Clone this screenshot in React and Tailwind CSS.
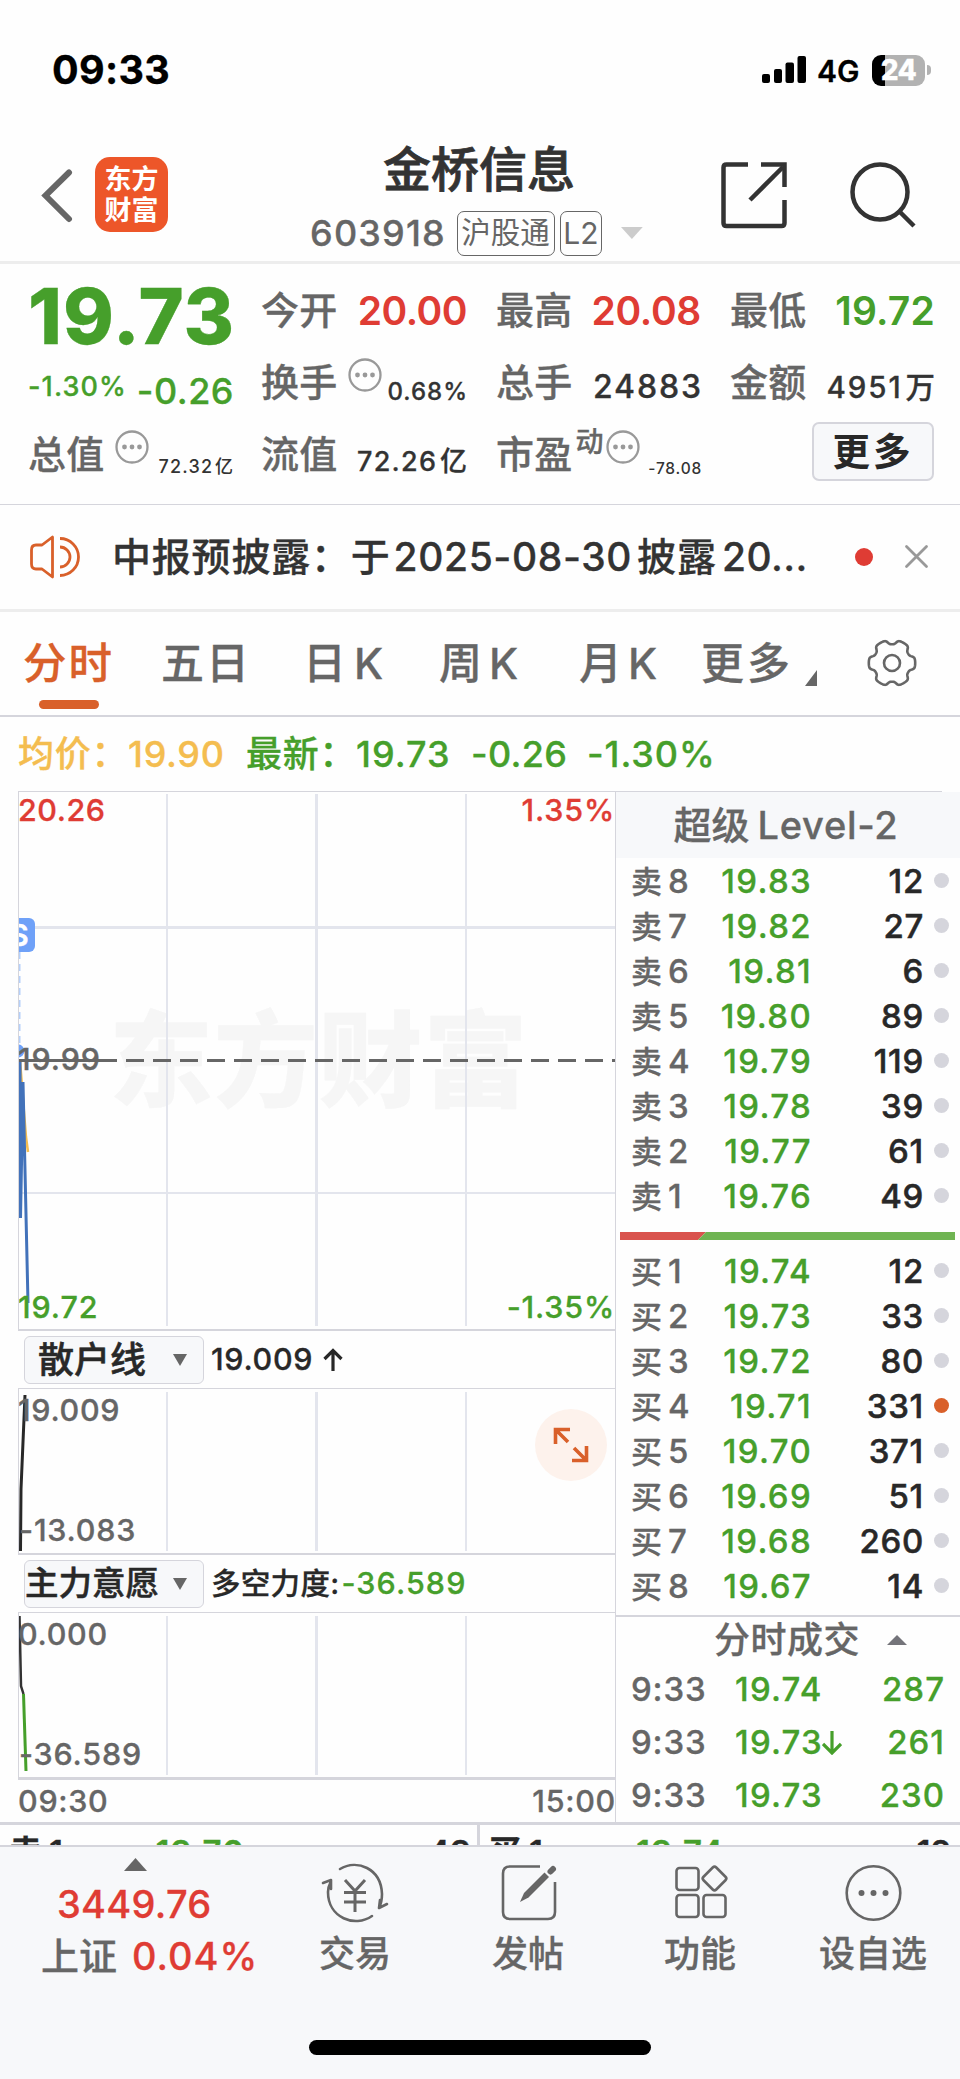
import React from 'react';

const sells = [
  ['8', '19.83', '12'],
  ['7', '19.82', '27'],
  ['6', '19.81', '6'],
  ['5', '19.80', '89'],
  ['4', '19.79', '119'],
  ['3', '19.78', '39'],
  ['2', '19.77', '61'],
  ['1', '19.76', '49'],
];

const buys = [
  ['1', '19.74', '12'],
  ['2', '19.73', '33'],
  ['3', '19.72', '80'],
  ['4', '19.71', '331', true],
  ['5', '19.70', '371'],
  ['6', '19.69', '51'],
  ['7', '19.68', '260'],
  ['8', '19.67', '14'],
];

const trades = [
  ['9:33', '19.74', '', '287'],
  ['9:33', '19.73', 'down', '261'],
  ['9:33', '19.73', '', '230'],
];

// outline of the six-toothed settings gear
const gearPath = (() => {
  const points = [];
  for (let i = 0; i < 180; i++) {
    const a = (i / 180) * Math.PI * 2;
    const r = 20.8 + 2.4 * Math.tanh(2.2 * Math.cos(6 * a) + 0.8);
    points.push(`${(25 + r * Math.cos(a)).toFixed(2)} ${(25 + r * Math.sin(a)).toFixed(2)}`);
  }
  return `M${points.join('L')}Z`;
})();

const Dots = ({ className }) => (
  <svg className={className} width="34" height="34" viewBox="0 0 34 34" fill="none">
    <circle cx="17" cy="17" r="15.500" stroke="#999" strokeWidth="2.300" />
    <circle cx="9.500" cy="17" r="2.400" fill="#999" />
    <circle cx="17" cy="17" r="2.400" fill="#999" />
    <circle cx="24.500" cy="17" r="2.400" fill="#999" />
  </svg>
);

const Arrow = ({ down, className }) => (
  <svg className={className} width="20" height="24" viewBox="0 0 20 24" fill="none" stroke="currentColor" strokeWidth="3.200">
    {down ? <path d="M10 0V22M1 13L10 22L19 13" /> : <path d="M10 23V3M1.500 11L10 2.500L18.500 11" />}
  </svg>
);

const StatusBar = () => (
  <div className="flex h-[140px] items-start justify-between pl-[52px] pr-[29px] text-black">
    <div className="mt-[51px] text-[39.500px] leading-none font-bold tracking-[0.300px]">09:33</div>
    <div className="mt-[54px] flex h-[32px] items-center">
      <svg width="44" height="28" viewBox="0 0 44 28">
        <rect x="0" y="18" width="8" height="9" rx="2" />
        <rect x="12" y="13" width="8" height="14" rx="2" />
        <rect x="23.500" y="6.500" width="8.500" height="20.500" rx="2" />
        <rect x="35.500" y="0" width="8.500" height="27" rx="2" />
      </svg>
      <span className="ml-[11px] w-[43px] pt-px text-[30px] leading-none font-semibold">4G</span>
      <div className="ml-[12px] flex h-[31px] w-[53px] items-center justify-center overflow-hidden rounded-[9px] bg-[linear-gradient(to_right,#000_13px,#b2b2b2_13px)]">
        <span className="text-[28px] leading-none font-extrabold tracking-[-0.5px] text-white">24</span>
      </div>
      <div className="ml-[2px] h-[10px] w-[4px] rounded-r-full bg-[#b2b2b2]" />
    </div>
  </div>
);

const Header = () => (
  <div className="flex h-[124px] border-b-[3px] border-[#ededed] pl-[41px]">
    <svg className="mt-[28px]" width="32" height="56" viewBox="0 0 32 56" fill="none" stroke="#666" strokeWidth="6" strokeLinecap="round">
      <path d="M28 4.500L4.500 27.500L28 51" strokeLinejoin="miter" />
    </svg>
    <div className="mt-[17px] ml-[22px] flex h-[75px] w-[73px] flex-col items-center justify-center rounded-[15px] bg-[#ed5629] pt-px text-[27px] leading-[31px] font-semibold text-white [-webkit-text-stroke:0px]">
      <span>东方</span>
      <span>财富</span>
    </div>
    <div className="ml-[142px] w-[334px]">
      <div className="mt-[6px] ml-[73px] text-[48px] leading-none font-medium text-[#333] [-webkit-text-stroke:0.800px_#333]">金桥信息</div>
      <div className="mt-[16px] flex h-[46px] items-center">
        <span className="w-[148px] text-[36px] leading-none font-medium tracking-[1.200px] text-[#666]">603918</span>
        <span className="flex h-[45px] w-[99px] items-center justify-center rounded-[7px] border-[1.500px] border-[#666] text-[29.500px] leading-none font-normal text-[#666] [-webkit-text-stroke:0px]">沪股通</span>
        <span className="ml-[5px] flex h-[45px] w-[43px] items-center justify-center rounded-[7px] border-[1.500px] border-[#666] text-[30px] leading-none font-normal text-[#666] [-webkit-text-stroke:0px]">L2</span>
        <svg className="ml-[18px]" width="24" height="12" viewBox="0 0 24 12">
          <path d="M1 0H23L12 12Z" fill="#ccc" />
        </svg>
      </div>
    </div>
    <svg className="mt-[20px] ml-[75px]" width="70" height="70" viewBox="0 0 70 70" fill="none" stroke="#333" strokeWidth="4.500">
      <path d="M29 4.500H7.500Q4.500 4.500 4.500 7.500V63Q4.500 66 7.500 66H62.500Q65.500 66 65.500 63V40" />
      <path d="M42 4.500H65.500V27" />
      <path d="M31 40L64 7" />
    </svg>
    <svg className="mt-[20px] ml-[58px]" width="70" height="70" viewBox="0 0 70 70" fill="none" stroke="#333" strokeWidth="4.500">
      <circle cx="33" cy="32" r="27.500" />
      <path d="M52 51L67 66" />
    </svg>
  </div>
);

const Cell = ({ label, sup, dots, value, unit, valueClass }) => (
  <div className="flex h-[72px] items-center justify-between whitespace-nowrap leading-none">
    <div className="flex items-center">
      <span className="text-[38px] leading-none font-medium tracking-[0.300px] text-[#666]">{label}</span>
      {sup && <span className="-mt-[24px] ml-[3px] text-[28px] leading-none font-medium text-[#666]">{sup}</span>}
      {dots && <Dots className={sup ? '-mt-[15px] ml-[2px]' : '-mt-[15px] ml-[10px]'} />}
    </div>
    <span className={valueClass}>
      {value}
      {unit && <span className="ml-[0.100em] tracking-normal">{unit}</span>}
    </span>
  </div>
);

const Quote = () => (
  <div className="flex h-[241px] border-b border-[#d5d5dc] pt-[10px] pl-[28px]">
    <div className="w-[205px]">
      <div className="-mr-[2px] flex h-[84px] items-center justify-end text-[77px] leading-none font-extrabold tracking-[1px] text-[#469f2b]">19.73</div>
      <div className="flex h-[60px] items-center justify-between whitespace-nowrap text-[#469f2b]">
        <span className="-mt-[4px] text-[27px] leading-none font-medium tracking-[1.100px]">-1.30%</span>
        <span className="-mr-px mt-[6px] text-[36px] leading-none font-medium tracking-[0.500px]">-0.26</span>
      </div>
      <Cell label="总值" dots value="72.32" unit="亿" valueClass="mt-[26px] text-[18px] font-medium tracking-[1.200px] text-[#333] [-webkit-text-stroke:0px]" />
    </div>
    <div className="ml-[28px] w-[206px]">
      <Cell label="今开" value="20.00" valueClass="mt-[1px] text-[39px] font-semibold tracking-[-0.500px] text-[#df3c34] [-webkit-text-stroke:0px]" />
      <Cell label="换手" dots value="0.68%" valueClass="-mr-px mt-[20px] text-[24px] font-medium tracking-[1px] text-[#333]" />
      <Cell label="流值" value="72.26" unit="亿" valueClass="mt-[15px] text-[27px] font-medium tracking-[1.300px] text-[#333]" />
    </div>
    <div className="ml-[29px] w-[205px]">
      <Cell label="最高" value="20.08" valueClass="mt-[1px] text-[39px] font-semibold tracking-[-0.300px] text-[#df3c34] [-webkit-text-stroke:0px]" />
      <Cell label="总手" value="24883" valueClass="-mr-[2px] mt-[10px] text-[32px] font-medium tracking-[1.900px] text-[#333]" />
      <Cell label="市盈" sup="动" dots value="-78.08" valueClass="-mr-px mt-[29px] text-[15.500px] font-medium tracking-[0.800px] text-[#333] [-webkit-text-stroke:0px]" />
    </div>
    <div className="ml-[29px] w-[205px]">
      <Cell label="最低" value="19.72" valueClass="mt-[1px] text-[39px] font-semibold tracking-[0.200px] text-[#469f2b] [-webkit-text-stroke:0px]" />
      <Cell label="金额" value="4951" unit="万" valueClass="mt-[11px] text-[29.500px] font-medium tracking-[1.900px] text-[#333]" />
      <button className="mt-[4px] ml-[82px] flex h-[59px] w-[122px] items-center justify-center rounded-[7px] border-2 border-[#d5d5dc] bg-[#f7f8fa] text-[37.500px] leading-none font-semibold tracking-[3px] text-[#282828] [-webkit-text-stroke:0px]">
        更多
      </button>
    </div>
  </div>
);

const Notice = () => (
  <div className="flex h-[107px] items-center border-b-[3px] border-[#ededed] pl-[29px] whitespace-nowrap">
    <svg width="52" height="46" viewBox="0 0 52 46" fill="none" stroke="#d9602a" strokeWidth="2.800" strokeLinejoin="round">
      <path d="M23.500 3V43L13 35H7Q2.500 35 2.500 30V16Q2.500 11 7 11H13Z" />
      <path d="M31 13A9.800 9.800 0 0 1 31 33M31 4.500A18.500 18.500 0 0 1 31 41.500" />
    </svg>
    <div className="ml-[31px] flex w-[740px] items-center pb-[2px] text-[39px] leading-none font-medium text-[#333]">
      <span className="tracking-[0.800px]">中报预披露：于</span>
      <span className="ml-[3px] tracking-[0.600px]">2025-08-30</span>
      <span className="ml-[5px] tracking-[1px]">披露</span>
      <span className="ml-[5px] tracking-[0.400px]">20...</span>
    </div>
    <div className="ml-[3px] size-[18px] rounded-full bg-[#df3c34]" />
    <svg className="ml-[31px]" width="26" height="26" viewBox="0 0 26 26" stroke="#999" strokeWidth="2.800" strokeLinecap="round">
      <path d="M2.500 2.500L22.500 22.500M22.500 2.500L2.500 22.500" />
    </svg>
  </div>
);

const Tabs = () => (
  <div className="flex h-[105px] items-start border-b-2 border-[#d5d5dc] pl-[23px] pt-[30px] text-[43px] leading-none font-medium whitespace-nowrap text-[#666]">
    <div className="w-[138px] text-[#d9602a]">
      <div className="text-[43.500px] leading-none tracking-[2px]">分时</div>
      <div className="mt-[14px] ml-[16px] h-[9px] w-[60px] rounded-full bg-[#d9602a]" />
    </div>
    <div className="w-[142px] tracking-[2px]">五日</div>
    <div className="w-[136px]">日<span className="ml-[8px] text-[42.500px]">K</span></div>
    <div className="w-[140px]">周<span className="ml-[7px] text-[42.500px]">K</span></div>
    <div className="w-[122px]">月<span className="ml-[6px] text-[42.500px]">K</span></div>
    <div className="w-[104px] tracking-[3px]">更多</div>
    <svg className="mt-[28px]" width="12" height="16" viewBox="0 0 12 16">
      <path d="M12 0V16H0Z" fill="#666" />
    </svg>
    <svg className="-mt-[4px] ml-[50px]" width="50" height="50" viewBox="0 0 50 50" fill="none" stroke="#666" strokeWidth="2.600" strokeLinejoin="round">
      <path d={gearPath} />
      <circle cx="25" cy="25" r="8" />
    </svg>
  </div>
);

const Legend = () => (
  <div className="flex h-[74px] items-center pl-[18px] pb-px text-[36px] leading-none font-medium tracking-[0.700px] whitespace-nowrap text-[#469f2b]">
    <span className="w-[110px] text-[#f4bd50]">均价：</span>
    <span className="w-[118px] text-[#f4bd50]">19.90</span>
    <span className="w-[110px]">最新：</span>
    <span className="w-[115px] tracking-[1px]">19.73</span>
    <span className="w-[116px] tracking-[0.300px]">-0.26</span>
    <span className="tracking-[0.900px]">-1.30%</span>
  </div>
);

const PriceChart = () => (
  <div className="relative h-[539px] w-[597px] overflow-hidden border-b-2 border-l border-[#d5d5dc] text-[30.500px] leading-none font-medium">
    <div className="absolute top-[217px] left-[90px] text-[104px] leading-none font-black tracking-[0.800px] whitespace-nowrap text-[#f6f6f6]">东方财富</div>
    <svg className="absolute inset-0" width="597" height="537" viewBox="0 0 597 537" fill="none">
      <g stroke="#e3e5ed">
        <path d="M148 2V534M447 2V534" strokeWidth="2" />
        <path d="M297.500 2V534" strokeWidth="3" />
        <path d="M0 135.500H597" strokeWidth="3" />
        <path d="M0 401H597" strokeWidth="2" />
      </g>
      <path d="M0.500 160V252" stroke="#b5d0fa" strokeWidth="2" strokeDasharray="7 5" />
      <circle cx="-1" cy="259" r="6.500" fill="#6fa1f8" />
      <path d="M1 268L5 320L7 345L9 360" stroke="#f4bd50" strokeWidth="2.500" />
      <path d="M1 268L1.500 426L4 290L9 511" stroke="#4272ba" strokeWidth="3" />
      <path d="M0 268.500H98" stroke="#666" strokeWidth="3" />
      <path d="M107 268.500H597" stroke="#666" strokeWidth="3" strokeDasharray="18 9" />
    </svg>
    <div className="absolute top-[126px] -left-[16px] flex h-[34px] w-[32px] items-center justify-center rounded-[6px] bg-[#6fa1f8] text-[30px] font-semibold text-white">S</div>
    <div className="absolute top-[3px] -left-px tracking-[0.500px] text-[#df3c34]">20.26</div>
    <div className="absolute top-[3px] right-0 tracking-[0.800px] text-[#df3c34]">1.35%</div>
    <div className="absolute top-[252px] -left-px tracking-[0.900px] text-[#666]">19.99</div>
    <div className="absolute top-[500px] -left-px tracking-[0.900px] text-[#469f2b]">19.72</div>
    <div className="absolute top-[500px] right-0 tracking-[0.800px] text-[#469f2b]">-1.35%</div>
  </div>
);

const IndicatorHeader = ({ name, nameClass, children }) => (
  <div className="flex h-[58px] items-center border-b border-[#d5d5dc] pl-[6px] text-[30.500px] leading-none font-medium whitespace-nowrap text-[#282828]">
    <div className="flex h-[48px] w-[180px] items-center justify-between rounded-[6px] border-[1.500px] border-[#d5d5dc] bg-[#f7f8fa] pr-[16px]">
      <span className={nameClass}>{name}</span>
      <svg width="14" height="12" viewBox="0 0 14 12">
        <path d="M0 0H14L7 12Z" fill="#666" />
      </svg>
    </div>
    {children}
  </div>
);

const IndicatorChart = ({ top, bottom, borderClass, children }) => (
  <div className={`relative w-[597px] overflow-hidden border-l border-[#d5d5dc] text-[30.500px] leading-none font-medium text-[#666] ${borderClass}`}>
    <svg className="absolute inset-0" width="597" height="163" viewBox="0 0 597 163" fill="none">
      <path d="M148 3V162M447 3V162" stroke="#e3e5ed" strokeWidth="2" />
      <path d="M297.500 3V162" stroke="#e3e5ed" strokeWidth="3" />
      {children}
    </svg>
    <div className="absolute top-[6px] -left-px tracking-[0.700px]">{top}</div>
    <div className="absolute top-[126px] left-0 tracking-[0.800px]">{bottom}</div>
  </div>
);

const Charts = () => (
  <div className="w-[597px]">
    <PriceChart />
    <IndicatorHeader name="散户线" nameClass="pl-[13px] text-[36px] leading-none [-webkit-text-stroke:0.500px]">
      <span className="ml-[7px] tracking-[0.700px]">19.009</span>
      <Arrow className="ml-[10px]" />
    </IndicatorHeader>
    <div className="relative">
      <IndicatorChart top="19.009" bottom="-13.083" borderClass="h-[166px] border-b-2">
        <path d="M1.500 162L2 100L6 6" stroke="#282828" strokeWidth="3" />
      </IndicatorChart>
      <div className="absolute top-[20px] left-[517px] flex size-[72px] items-center justify-center rounded-full bg-[#fdf2ec]">
        <svg width="36" height="36" viewBox="0 0 36 36" fill="none" stroke="#d9602a" strokeWidth="3.600">
          <path d="M2.500 17V2.500H17M2.500 2.500L15 15M33.500 19V33.500H19M33.500 33.500L21 21" />
        </svg>
      </div>
    </div>
    <IndicatorHeader name="主力意愿" nameClass="text-[33.500px] leading-none [-webkit-text-stroke:0.500px]">
      <span className="ml-[7px] text-[29.500px] tracking-[0.300px]">多空力度:</span>
      <span className="ml-[2px] tracking-[1.100px] text-[#469f2b]">-36.589</span>
    </IndicatorHeader>
    <IndicatorChart top="0.000" bottom="-36.589" borderClass="h-[167px] border-b-3">
      <path d="M0.500 3L2 73L4.500 81" stroke="#333" strokeWidth="2.500" />
      <path d="M4.500 81L7 158" stroke="#469f2b" strokeWidth="3" />
    </IndicatorChart>
    <div className="-mr-px flex h-[42px] items-center justify-between pt-px text-[30.500px] leading-none font-medium tracking-[0.700px] text-[#666]">
      <span>09:30</span>
      <span>15:00</span>
    </div>
  </div>
);

const BookRow = ({ side, row }) => (
  <div className="flex h-[45px] items-center pl-[15px] text-[33px] leading-none font-medium">
    <span className="w-[37px] pt-[2px] text-[31px] text-[#666]">{side}</span>
    <span className="w-[30px] pt-[2px] text-[#666]">{row[0]}</span>
    <span className="w-[114px] pt-[2px] text-right tracking-[1.300px] text-[#469f2b]">{row[1]}</span>
    <span className="w-[112px] pt-[2px] text-right tracking-[0.700px] text-[#282828] [-webkit-text-stroke:0.500px]">{row[2]}</span>
    <span className={row[3] ? 'ml-[10px] size-[15px] rounded-full bg-[#d9602a]' : 'ml-[10px] size-[15px] rounded-full bg-[#d5d5dc]'} />
  </div>
);

const OrderBook = () => (
  <div className="w-[345px] border-l border-[#d5d5dc]">
    <div className="flex h-[66px] items-center justify-center bg-[#f7f8fa] pr-[4px] text-[38px] leading-none font-medium text-[#666]">
      超级<span className="ml-[8px] tracking-[0.700px]">Level-2</span>
    </div>
    {sells.map((row) => (
      <BookRow key={row[0]} side="卖" row={row} />
    ))}
    <svg className="mt-[14px] mb-[8px] ml-[4px] block" width="335" height="8" viewBox="0 0 335 8">
      <path d="M0 0H86L78 8H0Z" fill="#d9534d" />
      <path d="M86 0H335V8H78Z" fill="#6fb452" />
    </svg>
    {buys.map((row) => (
      <BookRow key={row[0]} side="买" row={row} />
    ))}
    <div className="mt-[7px] flex h-[49px] items-center border-t-2 border-[#d5d5dc] pb-px pl-[98px] text-[36px] leading-none font-medium text-[#666]">
      <span className="tracking-[0.500px]">分时成交</span>
      <svg className="ml-[27px]" width="20" height="10" viewBox="0 0 20 10">
        <path d="M10 0L20 10H0Z" fill="#74747a" />
      </svg>
    </div>
    {trades.map((t, i) => (
      <div key={i} className="flex h-[53px] items-center pb-[2px] pl-[15px] text-[33px] leading-none font-medium text-[#469f2b]">
        <span className="w-[104px] tracking-[0.800px] text-[#666]">{t[0]}</span>
        <span className="w-[86px] text-right tracking-[1.200px]">{t[1]}</span>
        <span className="w-[23px]">{t[2] && <Arrow down className="ml-px" />}</span>
        <span className="w-[101px] text-right tracking-[1px]">{t[3]}</span>
      </div>
    ))}
  </div>
);

const FiveLevelPeek = () => (
  <div className="flex h-[23px] overflow-hidden border-t-3 border-[#d5d5dc] text-[33px] leading-none font-semibold text-[#282828]">
    <div className="flex w-[480px] items-start border-r-3 border-[#d5d5dc] pt-[11px] pl-[9px]">
      <span className="w-[40px]">卖</span>
      <span className="w-[105px]">1</span>
      <span className="w-[90px] text-right tracking-[1px] text-[#469f2b]">19.76</span>
      <span className="w-[227px] text-right">49</span>
    </div>
    <div className="flex items-start pt-[11px] pl-[8px]">
      <span className="w-[41px]">买</span>
      <span className="w-[105px]">1</span>
      <span className="w-[90px] text-right tracking-[1px] text-[#469f2b]">19.74</span>
      <span className="w-[227px] text-right">12</span>
    </div>
  </div>
);

const NavItem = ({ label, className, children }) => (
  <div className={`flex flex-col items-center ${className}`}>
    <svg className="mt-[15px]" width="68" height="64" viewBox="0 0 68 64" fill="none" stroke="#666" strokeWidth="2.600">
      {children}
    </svg>
    <span className="mt-[10px] text-[36px] leading-none font-medium whitespace-nowrap text-[#666]">{label}</span>
  </div>
);

const BottomBar = () => (
  <div className="h-[234px] border-t-2 border-[#d5d5dc] bg-[#f7f8fa]">
    <div className="flex h-[193px]">
      <div className="w-[300px]">
        <svg className="mt-[11px] ml-[124px] block" width="23" height="13" viewBox="0 0 23 13">
          <path d="M11.500 0L23 13H0Z" fill="#666" />
        </svg>
        <div className="mt-[14px] ml-[57px] text-[38px] leading-none font-medium tracking-[0.300px] text-[#df3c34]">3449.76</div>
        <div className="mt-[14px] ml-[41px] flex text-[38px] leading-none font-medium whitespace-nowrap">
          <span className="w-[91px] text-[#666]">上证</span>
          <span className="tracking-[1px] text-[#df3c34]">0.04%</span>
        </div>
      </div>
      <NavItem label="交易" className="w-[110px]">
        <g strokeLinecap="round" strokeLinejoin="round">
          <path d="M19 7C36 -3 60 6 61 32C61 38 60 42 58 46M66 42L58 46L59 38" />
          <path d="M51 54C34 66 7 56 7 30C7 26 8 23 10 19M2 21L10 18L10 27" />
        </g>
        <path d="M24 18L34 29L44 18M34 29V50M23 30.500H45M23 40H45" strokeWidth="3" />
      </NavItem>
      <NavItem label="发帖" className="ml-[63px] w-[110px]">
        <path d="M46 4.500H16Q9 4.500 9 11.500V50Q9 57 16 57H54Q61 57 61 50V20" />
        <path d="M26 40L30 31L50.500 10.500L55 15L34.500 35.500Z" fill="#666" stroke="none" />
        <path d="M56.500 9.500L59 7" strokeWidth="6" strokeLinecap="round" />
      </NavItem>
      <NavItem label="功能" className="ml-[62px] w-[110px]">
        <rect x="10.500" y="6" width="22" height="22" rx="3" />
        <rect x="10.500" y="33" width="22" height="22" rx="3" />
        <rect x="37.500" y="33" width="22" height="22" rx="3" />
        <rect x="39.500" y="7.500" width="18" height="18" rx="2.500" transform="rotate(45 48.500 16.500)" />
      </NavItem>
      <NavItem label="设自选" className="ml-[63px] w-[110px]">
        <circle cx="34.500" cy="31" r="26.800" />
        <g fill="#666" stroke="none">
          <circle cx="22.500" cy="31" r="3" />
          <circle cx="34.500" cy="31" r="3" />
          <circle cx="46.500" cy="31" r="3" />
        </g>
      </NavItem>
    </div>
    <div className="mx-auto h-[15px] w-[342px] rounded-full bg-black" />
  </div>
);

export default function App() {
  return (
    <div className="flex h-[2079px] w-[960px] flex-col overflow-hidden bg-[#fefefe] font-[Inter,'Noto_Sans_CJK_SC',sans-serif] [-webkit-text-stroke:0.300px]">
      <StatusBar />
      <Header />
      <Quote />
      <Notice />
      <Tabs />
      <Legend />
      <div className="ml-[18px] h-px w-[924px] shrink-0 bg-[#d5d5dc]" />
      <div className="flex h-[1030px] pl-[18px]">
        <Charts />
        <OrderBook />
      </div>
      <FiveLevelPeek />
      <BottomBar />
    </div>
  );
}
